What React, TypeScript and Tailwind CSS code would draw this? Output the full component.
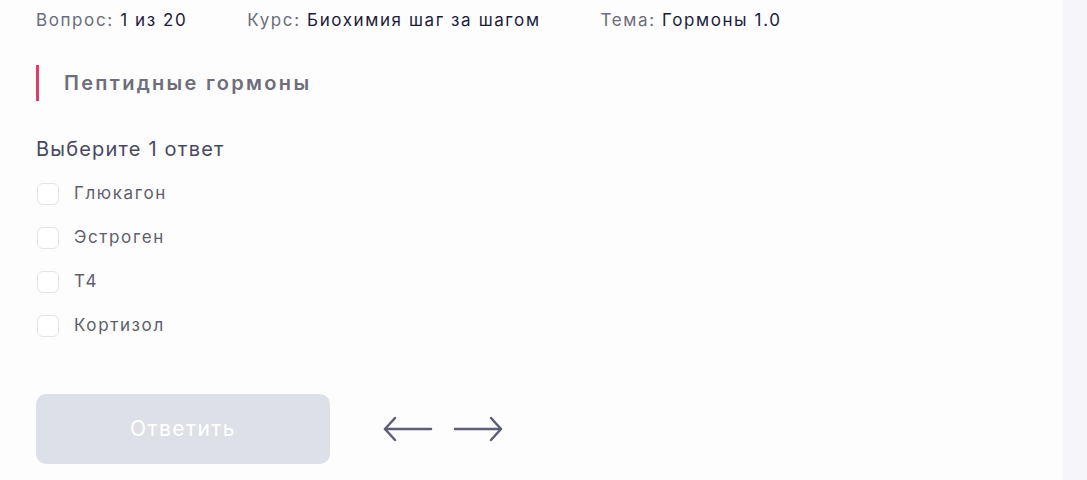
const options = ["Глюкагон", "Эстроген", "Т4", "Кортизол"];

const Meta = ({ label, value }: { label: string; value: string }) => (
  <span>
    <span className="text-[#6c6c7c]">{label}: </span>
    <span className="text-[#1c1c3a]">{value}</span>
  </span>
);

const Arrow = ({ dir }: { dir: "left" | "right" }) => (
  <svg width="50" height="26" viewBox="0 0 50 26" fill="none" stroke="#5d5d78" strokeWidth="2.5" strokeLinecap="round" strokeLinejoin="round">
    {dir === "left" ? (
      <>
        <path d="M2 13h46" />
        <path d="M12 2L2 13l10 11" />
      </>
    ) : (
      <>
        <path d="M2 13h46" />
        <path d="M38 2l10 11-10 11" />
      </>
    )}
  </svg>
);

export default function App() {
  return (
    <div className="flex h-[480px] w-full bg-[#fdfdfd] font-['Inter',sans-serif]">
      <main className="flex-1 pl-9 pt-2">
        {/* meta line */}
        <div className="flex gap-[60px] text-[17px] leading-6 tracking-[1.6px]">
          <Meta label="Вопрос" value="1 из 20" />
          <Meta label="Курс" value="Биохимия шаг за шагом" />
          <Meta label="Тема" value="Гормоны 1.0" />
        </div>

        <div className="mt-[33px] flex h-9 items-center border-l-[3px] border-[#e23c68] pl-[25px]">
          <h2 className="text-[20px] font-semibold tracking-[2.3px] text-[#6e6e7c]">Пептидные гормоны</h2>
        </div>

        <p className="mt-[34px] text-[20px] leading-7 tracking-[1.2px] text-[#484862]">Выберите 1 ответ</p>

        <ul className="mt-[20px] flex flex-col gap-[22px]">
          {options.map((o) => (
            <li key={o} className="flex h-[22px] items-center gap-[15px]">
              <span className="ml-px h-[22px] w-[22px] rounded-[6px] border border-[#e4e4e8] bg-white" />
              <span className="text-[17px] tracking-[1.6px] text-[#5f5f6c]">{o}</span>
            </li>
          ))}
        </ul>

        <div className="mt-[57px] flex items-center">
          <button className="h-[70px] w-[294px] rounded-[10px] bg-[#dde1e7] text-[21px] tracking-[1.4px] text-white">
            Ответить
          </button>
          <div className="ml-[53px] flex gap-[20px]">
            <Arrow dir="left" />
            <Arrow dir="right" />
          </div>
        </div>
      </main>
      <aside className="w-6 bg-[#f5f5fa]" />
    </div>
  );
}
